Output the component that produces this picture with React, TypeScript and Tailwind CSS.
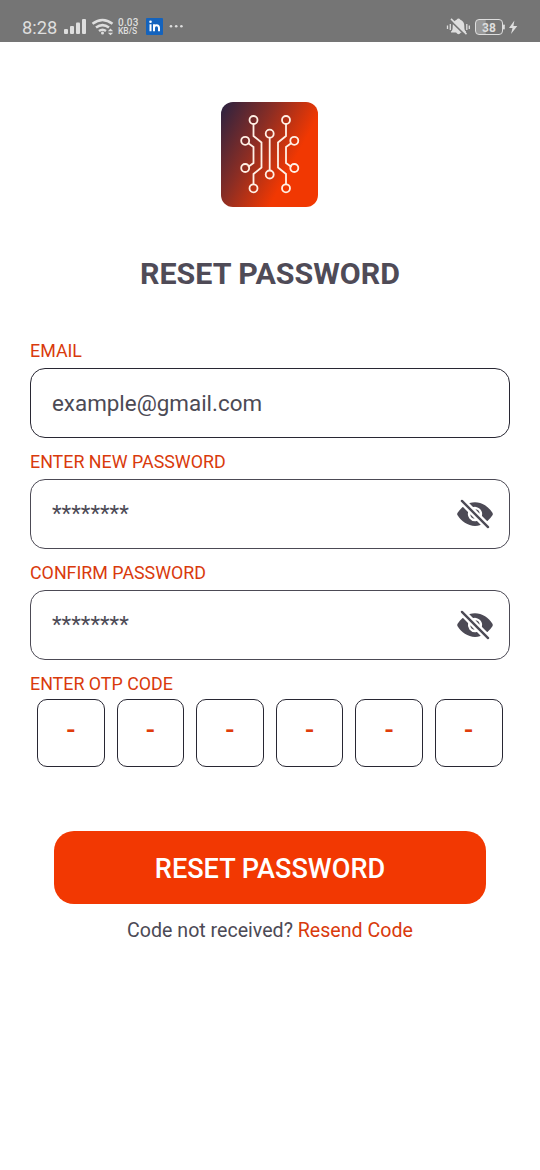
import { IoEyeOff } from "react-icons/io5";

function StatusBar() {
  return (
    <header className="flex h-[42px] items-start bg-[#757575] pl-[22px] pr-[25px] pt-[17px] text-[#dedede]">
      <span className="mt-px w-[42px] text-[18.3px] leading-[20px]">8:28</span>
      <svg className="h-[20px] w-[24px]" viewBox="64 17 24 20" fill="currentColor">
        <rect x="64" y="29" width="4" height="5" rx="1" />
        <rect x="70" y="26" width="4" height="8" rx="1" />
        <rect x="76" y="22.5" width="4" height="11.5" rx="1" />
        <rect x="82" y="19" width="4" height="15" rx="1" />
      </svg>
      <svg className="ml-[3px] h-[20px] w-[24px]" viewBox="91 17 24 20" fill="none" stroke="currentColor" strokeWidth="2.5">
        <path d="M92.5 23.8q10-7.6 20 0M96 27.6q6.5-5 13 0M99 31q3.5-2.6 7 0" />
        <circle cx="102.5" cy="33" r="1.5" fill="currentColor" stroke="none" />
        <path d="M107.8 31.2l2.7-2.6 2.7 2.6zM107.8 32.8l2.7 2.4 2.7-2.4z" fill="currentColor" stroke="none" />
      </svg>
      <div className="ml-[3px] w-[28px] text-[10px] leading-[8.5px]">
        <div className="mt-[1.5px] font-medium tracking-[0.2px]">0.03</div>
        <div className="text-[8.5px] font-medium">KB/S</div>
      </div>
      <svg className="mt-px h-[17px] w-[17px]" viewBox="0 0 17 17">
        <rect width="17" height="17" rx="1" fill="#1463bd" />
        <path d="M4.5 6.3v7M8 13.3v-7M8 10q0-2.8 2.5-2.8T13 10v3.3" stroke="#fff" strokeWidth="2" fill="none" />
        <circle cx="4.5" cy="3.8" r="1.3" fill="#fff" />
      </svg>
      <svg className="ml-[6px] h-[20px] w-[16px]" viewBox="0 0 16 20" fill="currentColor">
        <circle cx="2" cy="9.2" r="1.3" />
        <circle cx="7.2" cy="9.2" r="1.3" />
        <circle cx="12.4" cy="9.2" r="1.3" />
      </svg>
      <svg className="ml-auto h-[20px] w-[24px]" viewBox="446 17 24 20" fill="currentColor">
        <path d="M451 31.6c1.5-1.2 1.7-2.6 1.7-5.6 0-3.400 1.400-5.400 3.900-6.300q1.900-2.600 3.800 0c2.500.9 3.900 2.900 3.900 6.300 0 3 .2 4.400 1.700 5.600v.9h-5.100q-2.400 3.500-4.800 0h-5.100z" />
        <path d="M450.500 20.700l14.500 14.200" stroke="#757575" strokeWidth="1.700" />
        <path d="M451 18.900l15.500 15.200" stroke="currentColor" strokeWidth="1.500" />
        <path d="M447.500 25.500v3.500M450.300 24v6M466.800 24v6M469.300 25.500v3.500" stroke="currentColor" strokeWidth="1.300" />
      </svg>
      <div className="ml-[5px] mt-[2px] flex h-[16px] w-[28px] items-center justify-center rounded-[4px] border-[1.5px] border-[#dedede] bg-linear-to-r from-[#999] from-35% to-[#757575] to-40% pt-px text-[12px] font-bold leading-none">
        38
      </div>
      <svg className="h-[20px] w-[16px] -mr-[4px]" viewBox="503 17 16 20" fill="currentColor">
        <rect x="503" y="24.5" width="1.8" height="5" rx=".7" />
        <path d="M514.4 20.5l-5.4 7.6h3.5l-1.5 6 6.3-8h-3.9z" />
      </svg>
    </header>
  );
}

function Logo() {
  return (
    <svg className="h-[105px] w-[97px]" viewBox="0 0 97 105" fill="none">
      <defs>
        <linearGradient id="logo-fill" gradientUnits="userSpaceOnUse" x1="0" y1="8" x2="78" y2="50">
          <stop stopColor="#30233f" />
          <stop offset=".5" stopColor="#8a2d24" />
          <stop offset="1" stopColor="#f13802" />
        </linearGradient>
      </defs>
      <rect width="97" height="105" rx="12" fill="url(#logo-fill)" />
      <g stroke="#fff0e5" strokeWidth="1.8">
        <path d="M32.5 22v12l8 6.5v25l-8 6.5v10M65 22v12l-8 6.5v25l8 6.5v10M48.7 36v32M27 41l5.500 4v16l-5.500 4M70.500 41l-5.500 4v16l5.500 4" />
        <circle cx="32.5" cy="18" r="4" />
        <circle cx="65" cy="18" r="4" />
        <circle cx="48.7" cy="31.7" r="4" />
        <circle cx="24.2" cy="38.8" r="4" />
        <circle cx="73.3" cy="38.8" r="4" />
        <circle cx="24.2" cy="66" r="4" />
        <circle cx="73.3" cy="66" r="4" />
        <circle cx="48.7" cy="72.5" r="4" />
        <circle cx="32.5" cy="86.3" r="4" />
        <circle cx="65" cy="86.3" r="4" />
      </g>
    </svg>
  );
}

function Label({ children }: { children: string }) {
  return <div className="h-[28px] text-[17.85px] leading-[21px] text-[#d93a0c]">{children}</div>;
}

function PasswordField({ label }: { label: string }) {
  return (
    <div className="mt-[13px]">
      <Label>{label}</Label>
      <div className="flex h-[70px] items-center justify-between rounded-[15px] border-[1.3px] border-[#4c4a55] pl-[21px] pr-[15.5px] text-[22.3px] text-[#4c4a55]">
        <span>********</span>
        <IoEyeOff size={38} />
      </div>
    </div>
  );
}

export default function App() {
  return (
    <div className="flex h-[1170px] w-[540px] flex-col bg-white font-['Roboto',sans-serif]">
      <StatusBar />
      <main className="flex flex-col">
        <div className="mt-[60px] flex justify-center pr-px">
          <Logo />
        </div>
        <h1 className="mt-[49px] text-center text-[30.4px] font-bold leading-[36px] text-[#4f4b57]">RESET PASSWORD</h1>
        <form className="mt-[48px] px-[30px]">
          <Label>EMAIL</Label>
          <div className="flex h-[70px] items-center rounded-[15px] border-[1.3px] border-[#282733] px-[21px] pt-[2px] text-[22.4px] text-[#4c4a55]">
            example@gmail.com
          </div>
          <PasswordField label="ENTER NEW PASSWORD" />
          <PasswordField label="CONFIRM PASSWORD" />
          <div className="mt-[13px]">
            <div className="h-[26px] text-[17.85px] leading-[21px] text-[#d93a0c]">ENTER OTP CODE</div>
            <div className="grid h-[68px] grid-cols-6 gap-3 pl-[7px] pr-[7.5px]">
              {[0, 1, 2, 3, 4, 5].map((i) => (
                <div key={i} className="flex items-center justify-center rounded-[10px] border border-[#282733] pb-[5px] text-[27px] font-medium text-[#e03c0c]">
                  -
                </div>
              ))}
            </div>
          </div>
        </form>
        <button className="mx-[54px] mt-[64px] h-[73px] rounded-[20px] bg-[#f23802] pt-[4px] text-[27.1px] font-medium text-white">
          RESET PASSWORD
        </button>
        <p className="mt-[15px] text-center text-[19.6px] leading-[24px] text-[#4c4a55]">
          Code not received? <span className="text-[#d93a0c]">Resend Code</span>
        </p>
      </main>
    </div>
  );
}
